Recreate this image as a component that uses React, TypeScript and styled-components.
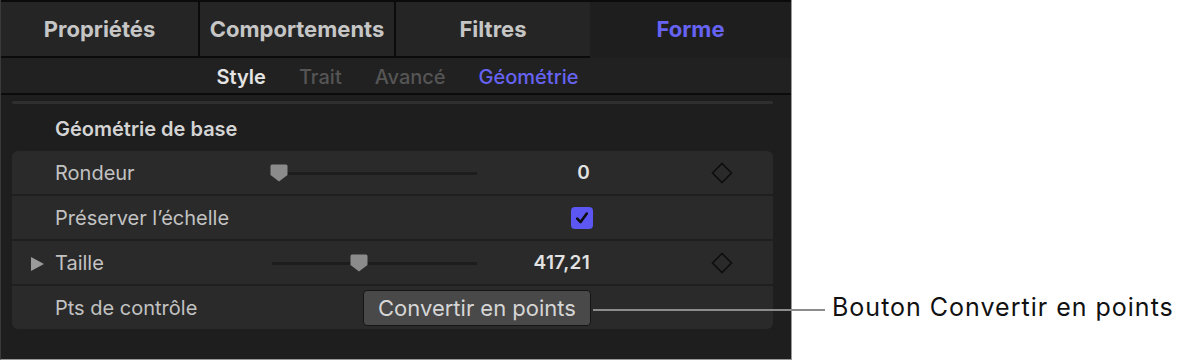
import styled, { createGlobalStyle } from "styled-components";

const GlobalStyle = createGlobalStyle`
  html, body {
    margin: 0;
    padding: 0;
    background: #ffffff;
  }
  body {
    font-family: Inter, "Liberation Sans", sans-serif;
  }
`;

const tabs = ["Propriétés", "Comportements", "Filtres", "Forme"];
const subTabs = [
  { label: "Style", state: "on" },
  { label: "Trait", state: "off" },
  { label: "Avancé", state: "off" },
  { label: "Géométrie", state: "active" },
];

const Thumb = () => (
  <svg width="18" height="18" viewBox="0 0 18 18">
    <path d="M2 0.5 H16 Q17.5 0.5 17.5 2 V11 L9 17.5 L0.5 11 V2 Q0.5 0.5 2 0.5 Z" fill="#8b8b8b" />
  </svg>
);

const Diamond = () => (
  <svg width="22" height="22" viewBox="0 0 22 22">
    <path d="M11 1.5 L20.5 11 L11 20.5 L1.5 11 Z" fill="none" stroke="#0e0e0e" strokeWidth="1.6" />
  </svg>
);

const Slider = ({ value }: { value: number }) => (
  <Track>
    <Knob style={{ left: `${value * 187 - 2}px` }}>
      <Thumb />
    </Knob>
  </Track>
);

const App = () => {
  return (
    <Page>
      <GlobalStyle />
      <Panel>
        <TabBar>
          {tabs.map((t) => (
            <Tab key={t} $active={t === "Forme"}>
              {t}
            </Tab>
          ))}
        </TabBar>
        <SubBar>
          {subTabs.map((s) => (
            <SubTab key={s.label} $state={s.state}>
              {s.label}
            </SubTab>
          ))}
        </SubBar>
        <Body>
          <Scroller />
          <SectionTitle>Géométrie de base</SectionTitle>
          <Group>
            <Row>
              <Label>Rondeur</Label>
              <Slider value={0} />
              <Value>0</Value>
              <Key>
                <Diamond />
              </Key>
            </Row>
            <Row>
              <Label>Préserver l’échelle</Label>
              <Check>
                <svg width="16" height="16" viewBox="0 0 16 16">
                  <path d="M3.2 8.6 L6.6 12 L12.8 3.6" fill="none" stroke="#0e0e0e" strokeWidth="2.6" strokeLinecap="round" strokeLinejoin="round" />
                </svg>
              </Check>
            </Row>
            <Row>
              <Disclosure />
              <Label>Taille</Label>
              <Slider value={0.43} />
              <Value>417,21</Value>
              <Key>
                <Diamond />
              </Key>
            </Row>
            <Row>
              <Label>Pts de contrôle</Label>
              <Button>Convertir en points</Button>
            </Row>
          </Group>
        </Body>
      </Panel>
      <Callout>
        <Leader />
        <CalloutText>Bouton Convertir en points</CalloutText>
      </Callout>
    </Page>
  );
};

const Page = styled.div`
  position: relative;
  width: 1184px;
  height: 362px;
  background: #ffffff;
`;

const Panel = styled.div`
  width: 790px;
  height: 359px;
  background: #1e1e1e;
  border-left: 1px solid #3a3a3a;
  border-right: 1px solid #9a9a9a;
  border-bottom: 1px solid #9a9a9a;
  box-sizing: content-box;
  display: flex;
  flex-direction: column;
  overflow: hidden;
`;

const TabBar = styled.div`
  display: grid;
  grid-template-columns: 199px 196px 194px 1fr;
  border-top: 2px solid #0b0b0b;
`;

const Tab = styled.div<{ $active?: boolean }>`
  height: 56px;
  display: flex;
  align-items: center;
  justify-content: center;
  padding-bottom: 1px;
  box-sizing: border-box;
  font-size: 22px;
  font-weight: 650;
  color: ${(p) => (p.$active ? "#6763f2" : "#c6c6c6")};
  background: ${(p) => (p.$active ? "#1e1e1e" : "#252525")};
  border-bottom: 2px solid ${(p) => (p.$active ? "transparent" : "#0b0b0b")};
  border-right: 2px solid #0b0b0b;
  &:nth-child(3),
  &:last-child {
    border-right: none;
  }
`;

const SubBar = styled.div`
  height: 37px;
  box-sizing: border-box;
  display: flex;
  justify-content: center;
  align-items: center;
  gap: 33px;
  padding: 3px 0 0 3px;
  background: #212121;
  border-bottom: 2px solid #0b0b0b;
`;

const SubTab = styled.div<{ $state: string }>`
  font-size: 20px;
  font-weight: ${(p) => (p.$state === "on" ? 600 : 500)};
  color: ${(p) =>
    p.$state === "active" ? "#6763f2" : p.$state === "on" ? "#e4e4e4" : "#555555"};
`;

const Body = styled.div`
  flex: 1;
  padding: 6px 18px 0 11px;
  display: flex;
  flex-direction: column;
`;

const Scroller = styled.div`
  height: 3px;
  background: #2f2f2f;
  border-radius: 2px;
`;

const SectionTitle = styled.div`
  height: 44px;
  padding-top: 3px;
  display: flex;
  align-items: center;
  padding-left: 43px;
  font-size: 20px;
  font-weight: 600;
  color: #d4d4d4;
`;

const Group = styled.div`
  display: flex;
  flex-direction: column;
  gap: 2px;
  background: #1f1f1f;
  border-radius: 6px;
  overflow: hidden;
`;

const Row = styled.div`
  height: 43px;
  background: #2a2a2a;
  display: grid;
  grid-template-columns: 43px 217px 205px 113px 121px 22px 1fr;
  align-items: center;
`;

const Disclosure = styled.div`
  grid-column: 1;
  grid-row: 1;
  justify-self: start;
  margin-left: 19px;
  margin-top: 2px;
  width: 0;
  height: 0;
  border-top: 7.5px solid transparent;
  border-bottom: 7.5px solid transparent;
  border-left: 13px solid #9a9a9a;
`;

const Label = styled.div`
  grid-column: 2;
  grid-row: 1;
  font-size: 20px;
  color: #c2c2c2;
  white-space: nowrap;
`;

const Track = styled.div`
  grid-column: 3;
  grid-row: 1;
  position: relative;
  height: 3px;
  background: #1d1d1d;
  margin-top: 1px;
`;

const Knob = styled.div`
  position: absolute;
  top: -8px;
  width: 18px;
  height: 18px;
  line-height: 0;
`;

const Value = styled.div`
  grid-column: 4;
  grid-row: 1;
  text-align: right;
  font-size: 19px;
  font-weight: 600;
  letter-spacing: 0.3px;
  color: #e2e2e2;
`;

const Key = styled.div`
  grid-column: 6;
  grid-row: 1;
  line-height: 0;
`;

const Check = styled.div`
  grid-column: 4;
  grid-row: 1;
  justify-self: end;
  margin-right: -3px;
  width: 22px;
  height: 22px;
  border-radius: 4px;
  background: #5c57f2;
  display: flex;
  align-items: center;
  justify-content: center;
`;

const Button = styled.div`
  grid-column: 3 / 5;
  grid-row: 1;
  justify-self: end;
  margin-right: -1px;
  height: 34px;
  width: 226px;
  box-sizing: content-box;
  border: 1px solid #151515;
  border-radius: 4px;
  background: #494949;
  display: flex;
  align-items: center;
  justify-content: center;
  font-size: 22px;
  color: #d6d6d6;
`;

const Callout = styled.div`
  position: absolute;
  left: 593px;
  top: 296px;
  height: 28px;
  display: flex;
  align-items: center;
  gap: 7px;
`;

const Leader = styled.div`
  width: 232px;
  height: 2px;
  background: #8c8c8c;
`;

const CalloutText = styled.div`
  font-size: 25px;
  letter-spacing: 1px;
  margin-bottom: 6px;
  color: #111111;
  white-space: nowrap;
`;

export default App;
